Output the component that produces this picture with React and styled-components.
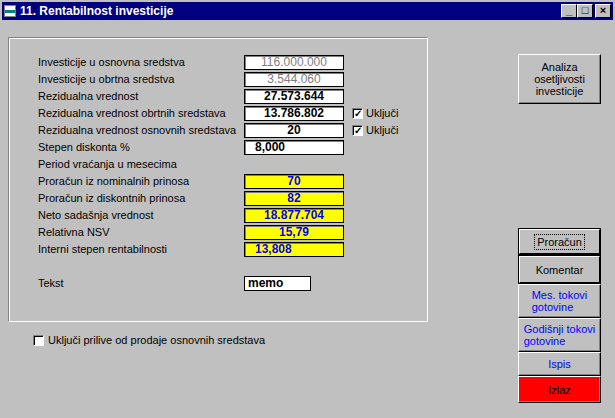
import React from "react";
import styled, { createGlobalStyle } from "styled-components";

const Global = createGlobalStyle`
  body { margin: 0; background: #c0c0c0; font-family: "Liberation Sans", Arial, sans-serif; font-size: 11px; }
`;

const ROWS = [
  { label: "Investicije u osnovna sredstva", value: "116.000.000", kind: "gray" },
  { label: "Investicije u obrtna sredstva", value: "3.544.060", kind: "gray" },
  { label: "Rezidualna vrednost", value: "27.573.644", kind: "white" },
  { label: "Rezidualna vrednost obrtnih sredstava", value: "13.786.802", kind: "white", check: true },
  { label: "Rezidualna vrednost osnovnih sredstava", value: "20", kind: "white", check: true },
  { label: "Stepen diskonta %", value: "8,000", kind: "white", left: true },
  { label: "Period vraćanja u mesecima" },
  { label: "Proračun iz nominalnih prinosa", value: "70", kind: "yellow" },
  { label: "Proračun iz diskontnih prinosa", value: "82", kind: "yellow" },
  { label: "Neto sadašnja vrednost", value: "18.877.704", kind: "yellow" },
  { label: "Relativna NSV", value: "15,79", kind: "yellow" },
  { label: "Interni stepen rentabilnosti", value: "13,808", kind: "yellow", left: true },
];

export default function App() {
  return (
    <Window>
      <Global />
      <TitleBar>
        <TitleIcon><IconStripe /></TitleIcon>
        <TitleText>11. Rentabilnost investicije</TitleText>
        <Controls>
          <CtlBtn>_</CtlBtn>
          <CtlBtn>□</CtlBtn>
          <CtlBtn>×</CtlBtn>
        </Controls>
      </TitleBar>
      <Body>
        <LeftCol>
          <Frame>
            {ROWS.map(r => (
              <Row key={r.label}>
                <Label>{r.label}</Label>
                {r.value && <Field $kind={r.kind} $left={r.left}>{r.value}</Field>}
                {r.check && <Check><Box>✓</Box>Uključi</Check>}
              </Row>
            ))}
            <TekstRow>
              <Label>Tekst</Label>
              <Memo>memo</Memo>
            </TekstRow>
          </Frame>
          <BottomCheck><Box />Uključi prilive od prodaje osnovnih sredstava</BottomCheck>
        </LeftCol>
        <RightCol>
          <Button $h={50}>Analiza<br />osetljivosti<br />investicije</Button>
          <Spacer />
          <Button $h={25} $dark><Focus>Proračun</Focus></Button>
          <Button $h={27} $dark>Komentar</Button>
          <Button $h={34} $blue>Mes. tokovi<br />gotovine</Button>
          <Button $h={34} $blue>Godišnji tokovi<br />gotovine</Button>
          <Button $h={24} $blue>Ispis</Button>
          <Button $h={27} $red>Izlaz</Button>
        </RightCol>
      </Body>
    </Window>
  );
}

const Window = styled.div`
  width: 615px;
  height: 418px;
  background: #c0c0c0;
  overflow: hidden;
`;

const TitleBar = styled.div`
  height: 18px;
  margin: 2px 2px 0 2px;
  background: #000080;
  display: flex;
  align-items: center;
  padding: 0 2px;
`;

const TitleIcon = styled.div`
  width: 12px;
  height: 12px;
  background: #fff;
  border: 1px solid #808080;
  box-sizing: border-box;
  margin-right: 4px;
  display: flex;
  align-items: center;
`;

const IconStripe = styled.div`
  width: 100%;
  height: 3px;
  background: #008080;
`;

const TitleText = styled.div`
  color: #fff;
  font-weight: bold;
  font-size: 12px;
  flex: 1;
`;

const Controls = styled.div`
  display: flex;
  gap: 0;
`;

const CtlBtn = styled.div`
  width: 16px;
  height: 14px;
  box-sizing: border-box;
  background: #c0c0c0;
  border: 1px solid;
  border-color: #fff #000 #000 #fff;
  font-size: 11px;
  font-weight: bold;
  line-height: 11px;
  text-align: center;
  &:last-child { margin-left: 2px; }
`;

const Body = styled.div`
  display: flex;
`;

const LeftCol = styled.div`
  padding: 17px 0 0 8px;
  width: 420px;
`;

const Frame = styled.div`
  border: 1px solid;
  border-color: #808080 #fff #fff #808080;
  box-shadow: inset 1px 1px 0 #fff;
  height: 285px;
  box-sizing: border-box;
  padding: 16px 0 0 29px;
  display: flex;
  flex-direction: column;
  gap: 1px;
`;

const Row = styled.div`
  display: flex;
  align-items: center;
  height: 16px;
`;

const Label = styled.div`
  width: 206px;
  color: #000;
`;

const Field = styled.div`
  width: 100px;
  height: 15px;
  box-sizing: border-box;
  border: 1px solid #000;
  box-shadow: inset 1px 1px 0 #808080;
  background: ${p => (p.$kind === "yellow" ? "#ffff00" : "#fff")};
  color: ${p => (p.$kind === "gray" ? "#808080" : p.$kind === "yellow" ? "#0000ff" : "#000")};
  font-weight: ${p => (p.$kind === "gray" ? "normal" : "bold")};
  font-size: 12px;
  line-height: 13px;
  text-align: ${p => (p.$left ? "left" : "center")};
  padding-left: ${p => (p.$left ? "10px" : "0")};
`;

const Check = styled.div`
  display: flex;
  align-items: center;
  margin-left: 8px;
  gap: 3px;
`;

const Box = styled.span`
  width: 11px;
  height: 11px;
  box-sizing: border-box;
  background: #fff;
  border: 1px solid;
  border-color: #808080 #fff #fff #808080;
  box-shadow: inset 1px 1px 0 #000;
  font-size: 10px;
  font-weight: bold;
  line-height: 10px;
  text-align: center;
`;

const TekstRow = styled(Row)`
  margin-top: 17px;
`;

const Memo = styled.div`
  width: 67px;
  height: 15px;
  box-sizing: border-box;
  border: 1px solid #000;
  background: #fff;
  font-weight: bold;
  font-size: 12px;
  line-height: 13px;
  padding-left: 3px;
`;

const BottomCheck = styled.div`
  display: flex;
  align-items: center;
  gap: 4px;
  margin: 12px 0 0 25px;
`;

const RightCol = styled.div`
  display: flex;
  flex-direction: column;
  margin: 34px 0 0 90px;
  width: 83px;
`;

const Spacer = styled.div`
  height: 124px;
`;

const Button = styled.div`
  height: ${p => p.$h}px;
  box-sizing: border-box;
  background: ${p => (p.$red ? "#ff0000" : "#c0c0c0")};
  color: ${p => (p.$blue ? "#0000ff" : "#000")};
  border: 1px solid;
  border-color: #fff #000 #000 #fff;
  box-shadow: ${p => (p.$dark ? "0 0 0 1px #000" : "inset -1px -1px 0 #808080")};
  margin: ${p => (p.$dark ? "1px" : "0")};
  display: flex;
  align-items: center;
  justify-content: center;
  text-align: ${p => (p.$blue ? "left" : "center")};
  font-size: 11px;
  line-height: 12px;
`;

const Focus = styled.span`
  border: 1px dotted #000;
  padding: 1px 2px;
`;
